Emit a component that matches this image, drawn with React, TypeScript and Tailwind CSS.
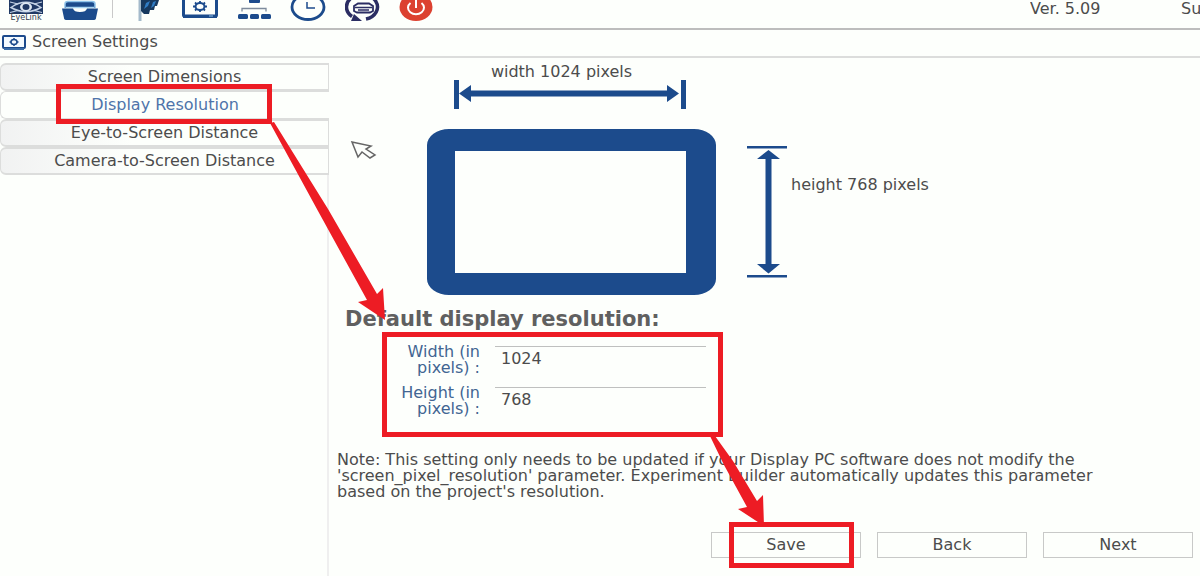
import type { ReactNode } from "react";

function ToolButton({ label, className, width, children }: { label: string; className: string; width: number; children: ReactNode }) {
  return (
    <button type="button" aria-label={label} className={`block shrink-0 ${className}`}>
      <svg width={width} height="24" viewBox={`0 0 ${width} 24`} className="block">
        {children}
      </svg>
    </button>
  );
}

function Toolbar() {
  return (
    <header className="flex h-[30px] items-start overflow-hidden border-b-2 border-[#bdbdbd] pl-2">
      <ToolButton label="EyeLink" className="" width={36}>
        <path d="M1 0H35V14H1Z" fill="#1f3864" />
        <path d="M3 7.500Q18 -3 33 7.500Q18 16 3 7.500Z" fill="#1f3864" stroke="#c5d3e6" strokeWidth="1.500" />
        <ellipse cx="18" cy="7" rx="6" ry="4.500" fill="#dfe8f2" />
        <ellipse cx="18" cy="7" rx="3.500" ry="3" fill="#1f3864" />
        <path d="M2 2L10 4M34 2L26 4M2 12.500L10 10.500M34 12.500L26 10.500" stroke="#c5d3e6" strokeWidth="1.200" />
        <text x="18" y="20" textAnchor="middle" fontSize="8" fontFamily="DejaVu Sans, sans-serif" fill="#333c4c">EyeLink</text>
      </ToolButton>
      <ToolButton label="Open file" className="ml-[18px]" width={36}>
        <path d="M3 8V4Q3 1.500 6 1.500H30Q33 1.500 33 4V8" fill="#1c4b8c" stroke="#8fc3ea" strokeWidth="1.500" />
        <path d="M4 7.500H32" stroke="#a9d5f2" strokeWidth="1.500" />
        <path d="M0 8.500H11Q12 12 18 12Q24 12 25 8.500H36L34 18Q34 20 31 20H5Q2 20 2 18Z" fill="#1c4b8c" />
      </ToolButton>
      <span className="ml-3.5 h-[18px] w-px shrink-0 bg-[#c9c9c9]" />
      <ToolButton label="Camera" className="ml-6" width={24}>
        <path d="M3 0V21" stroke="#a4bacb" strokeWidth="3" />
        <path d="M4 0H22L20 6H18L17 10H13L12 14H7L4 11Z" fill="#17395f" />
        <path d="M9 3L13 1L11 6L7 9ZM16 2L19 1L17 6L14 8Z" fill="#2f7cc4" />
      </ToolButton>
      <ToolButton label="Screen settings" className="ml-[21px]" width={36}>
        <rect x="1.500" y="-6" width="33" height="22" rx="1" fill="none" stroke="#1c4b8c" strokeWidth="3" />
        <path d="M1 16.500H35" stroke="#1c4b8c" strokeWidth="3" />
        <path d="M27 16H31" stroke="#8fc3ea" strokeWidth="1" />
        <ellipse cx="18" cy="6.500" rx="4.500" ry="3.500" fill="none" stroke="#1c4b8c" strokeWidth="2" />
        <path d="M18 1V3M18 10V12M11 6.500H13.500M22.500 6.500H25M13 2.500L14.500 4M23 2.500L21.500 4M13 10.500L14.500 9M23 10.500L21.500 9" stroke="#1c4b8c" strokeWidth="1.800" />
      </ToolButton>
      <ToolButton label="Network" className="ml-5" width={34}>
        <rect x="11" y="-4" width="11" height="7" rx="1" fill="#1c4b8c" />
        <path d="M4 11.500V8.500H28V11.500" fill="none" stroke="#7e8b9c" strokeWidth="1.300" />
        <rect x="0" y="14" width="10" height="5" rx="1.500" fill="#1c4b8c" />
        <rect x="12" y="14" width="9" height="5" rx="1.500" fill="#1c4b8c" />
        <rect x="23" y="14" width="10" height="5" rx="1.500" fill="#1c4b8c" />
      </ToolButton>
      <ToolButton label="Clock" className="ml-[18px]" width={36}>
        <ellipse cx="18" cy="7" rx="16" ry="12.500" fill="none" stroke="#1c4b8c" strokeWidth="2.800" />
        <path d="M17 2V8H25" fill="none" stroke="#1c4b8c" strokeWidth="1.500" />
      </ToolButton>
      <ToolButton label="Drift correction" className="ml-[19px]" width={36}>
        <path d="M7 16.500A15.500 12.500 0 1 1 21 19" fill="none" stroke="#2b2d63" strokeWidth="3.500" />
        <path d="M6 21L9 14L17 21Z" fill="#2b2d63" />
        <path d="M9 6L13 3.500H24L28 6V11L25 12.500H12L9 11Z" fill="none" stroke="#2b2d63" strokeWidth="1.800" />
        <path d="M10 7.500H27M13 10H24" stroke="#2b2d63" strokeWidth="1.400" />
      </ToolButton>
      <ToolButton label="Exit" className="ml-[18px]" width={34}>
        <ellipse cx="17" cy="7" rx="16.500" ry="14" fill="#dc4130" />
        <path d="M11.500 3A8 6.500 0 1 0 22.500 3" fill="none" stroke="#fff" strokeWidth="2" />
        <path d="M17 0V8" stroke="#fff" strokeWidth="2" />
      </ToolButton>
      <div className="ml-auto flex w-[170px] shrink-0 overflow-hidden whitespace-nowrap leading-[18px]">
        <span className="w-[151px] shrink-0">Ver. 5.09</span>
        <span>Su</span>
      </div>
    </header>
  );
}

function TitleBar() {
  return (
    <div className="flex h-7 items-center gap-1.5 border-b-2 border-[#dcdddc] pb-0.5 pl-0.5">
      <svg width="24" height="16" viewBox="0 0 24 16">
        <rect x="1" y="2" width="22" height="12" rx="1" fill="#f4fbff" stroke="#1c4b8c" strokeWidth="2" />
        <path d="M2 15H22" stroke="#3b6ea8" strokeWidth="2" />
        <ellipse cx="12" cy="8" rx="3" ry="2.500" fill="none" stroke="#1c4b8c" strokeWidth="1.500" />
        <path d="M12 4V5.500M12 10.500V12M7.500 8H9M15 8H16.500" stroke="#1c4b8c" strokeWidth="1.500" />
      </svg>
      <h1>Screen Settings</h1>
    </div>
  );
}

const tabs = ["Screen Dimensions", "Display Resolution", "Eye-to-Screen Distance", "Camera-to-Screen Distance"];

function Sidebar() {
  return (
    <nav className="flex w-[329px] shrink-0 flex-col pt-[5px]">
      {tabs.map((tab, i) => (
        <button
          key={tab}
          type="button"
          className={
            i === 1
              ? "h-7 rounded-l-md border-y border-l border-[#dcdddc] text-center text-[#4f74aa]"
              : "h-7 rounded-l-md border-y-2 border-l border-r border-[#dcdddc] bg-linear-to-r from-[#f1f2f2] to-[#fdfffc] to-40% text-center"
          }
        >
          {tab}
        </button>
      ))}
      <div className="flex-1 border-r-2 border-[#efefef]" />
    </nav>
  );
}

function Diagram() {
  return (
    <div className="flex pl-[98px]">
      <div className="flex w-[289px] flex-col pt-1.5">
        <p className="pr-5 text-center leading-4">width 1024 pixels</p>
        <svg width="289" height="30" viewBox="0 0 289 30" fill="#1c4b8c">
          <rect x="27" y="0" width="5" height="29" />
          <rect x="254" y="0" width="5" height="29" />
          <path d="M32 13.500L44 5V10.500H240V5L252 13.500L240 22V16.500H44V22Z" />
        </svg>
        <svg width="289" height="167" viewBox="0 0 289 167" className="mt-[18px]">
          <path d="M22 1H267A22 16 0 0 1 289 17V151A22 16 0 0 1 267 167H22A22 16 0 0 1 0 151V17A22 16 0 0 1 22 1ZM28 23V145H259V23Z" fill="#1c4b8c" fillRule="evenodd" />
        </svg>
      </div>
      <svg width="40" height="132" viewBox="0 0 40 132" fill="#1c4b8c" className="ml-[31px] mt-[88px]">
        <rect x="0" y="0" width="40" height="2.500" />
        <rect x="0" y="129" width="40" height="2.500" />
        <path d="M21.500 4L33 13H24.500V118H33L21.500 127.500L10 118H18.500V13H10Z" />
      </svg>
      <p className="ml-1 mt-[119px] leading-4">height 768 pixels</p>
    </div>
  );
}

function Field({ id, name, value }: { id: string; name: string; value: string }) {
  return (
    <div className="flex gap-[15px]">
      <label htmlFor={id} className="w-24 text-right leading-4 text-[#426592]">
        {name} (in
        <br />
        pixels) :
      </label>
      <input id={id} defaultValue={value} className="mt-0.5 h-6 w-[211px] border-t border-[#bfc0bf] bg-transparent px-1.5 outline-none" />
    </div>
  );
}

function Annotations() {
  return (
    <div className="pointer-events-none absolute inset-0">
      <div className="absolute left-[56px] top-[84px] h-[40px] w-[216px] border-[5px] border-[#ed1c24]" />
      <div className="absolute left-[382px] top-[332px] h-[105px] w-[341px] border-[5px] border-[#ed1c24]" />
      <div className="absolute left-[729px] top-[522px] h-[46px] w-[125px] border-[5px] border-[#ed1c24]" />
      <svg width="800" height="540" viewBox="0 0 800 540" className="absolute left-0 top-0">
        <path d="M270 123L274 122L328 209L377 294L383 288L385 320L358 302L367 300L318 211Z" fill="#ed1c24" />
        <path d="M710 436L715 436L733 461L757 501L763 495L764 526L738 509L747 507L724 465Z" fill="#ed1c24" />
        <path d="M352 142L371 146L366 149L375 155L370 158L362 152L358 157Z" fill="#fdfffc" stroke="#666" strokeWidth="1.500" />
      </svg>
    </div>
  );
}

export default function App() {
  return (
    <div className="relative flex min-h-screen flex-col overflow-hidden bg-[#fdfffc] font-['DejaVu_Sans',sans-serif] text-[16px] text-[#4c4c4c]">
      <Toolbar />
      <TitleBar />
      <div className="flex flex-1">
        <Sidebar />
        <main className="min-w-0 flex-1">
          <Diagram />
          <h2 className="ml-4 mt-3.5 text-[21px] font-bold leading-5 text-[#606060]">Default display resolution:</h2>
          <form className="ml-[55px] mt-[15px] flex flex-col gap-[9px]">
            <Field id="width" name="Width" value="1024" />
            <Field id="height" name="Height" value="768" />
          </form>
          <p className="ml-2 mt-[35px] leading-4">
            Note: This setting only needs to be updated if your Display PC software does not modify the
            <br />
            'screen_pixel_resolution' parameter. Experiment Builder automatically updates this parameter
            <br />
            based on the project's resolution.
          </p>
          <div className="mr-[7px] mt-8 flex justify-end gap-4">
            {["Save", "Back", "Next"].map((name) => (
              <button key={name} type="button" className="h-[26px] w-[150px] border border-[#c8c9c8]">
                {name}
              </button>
            ))}
          </div>
        </main>
      </div>
      <Annotations />
    </div>
  );
}
